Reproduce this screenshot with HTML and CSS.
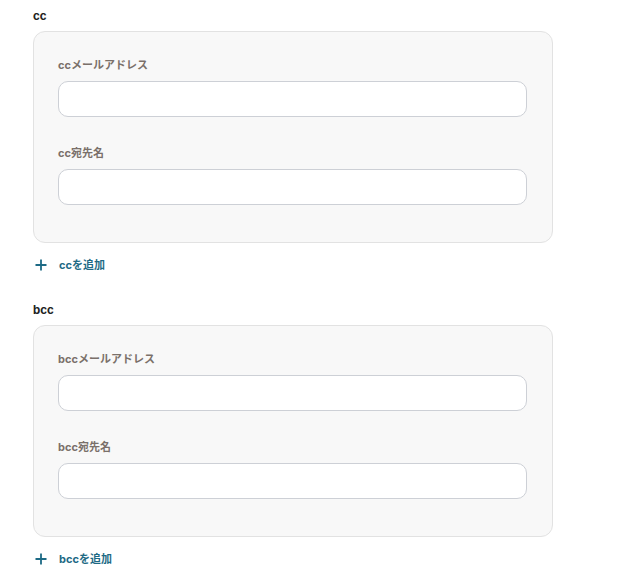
FILE: index.html
```html
<!DOCTYPE html>
<html lang="ja">
<head>
<meta charset="utf-8">
<link rel="stylesheet" href="styles.css">
</head>
<body>
<div class="page">
  <section class="group">
    <div class="group-title">cc</div>
    <div class="card">
      <div class="field">
        <label class="label">ccメールアドレス</label>
        <input class="input" type="text">
      </div>
      <div class="field">
        <label class="label">cc宛先名</label>
        <input class="input" type="text">
      </div>
    </div>
    <button class="add" type="button">
      <svg class="plus" width="12" height="12" viewBox="0 0 12 12"><path d="M6 0.5V11.5M0.5 6H11.5" stroke="currentColor" stroke-width="1.8" fill="none"/></svg>
      <span>ccを追加</span>
    </button>
  </section>
  <section class="group">
    <div class="group-title">bcc</div>
    <div class="card">
      <div class="field">
        <label class="label">bccメールアドレス</label>
        <input class="input" type="text">
      </div>
      <div class="field">
        <label class="label">bcc宛先名</label>
        <input class="input" type="text">
      </div>
    </div>
    <button class="add" type="button">
      <svg class="plus" width="12" height="12" viewBox="0 0 12 12"><path d="M6 0.5V11.5M0.5 6H11.5" stroke="currentColor" stroke-width="1.8" fill="none"/></svg>
      <span>bccを追加</span>
    </button>
  </section>
</div>
</body>
</html>
```
FILE: styles.css
```css
* { box-sizing: border-box; }
html, body { margin: 0; background: #fff; }
body {
  font-family: Inter, "Noto Sans CJK JP", sans-serif;
  color: #222;
}
.page {
  padding: 8px 0 0 33px;
  width: 553px;
}
.group { display: flex; flex-direction: column; }
.group + .group { margin-top: 28px; }
.group-title {
  font-size: 11.5px;
  font-weight: 700;
  line-height: 17px;
  color: #222;
  margin-bottom: 6px;
}
.card {
  background: #f8f8f8;
  border: 1px solid #e2e2e2;
  border-radius: 12px;
  padding: 25px 25px 37px 24px;
  display: flex;
  flex-direction: column;
  gap: 28px;
}
.field { display: flex; flex-direction: column; }
.label {
  font-size: 11px;
  font-weight: 700;
  line-height: 17px;
  color: #7a706a;
  margin-bottom: 7px;
}
.input {
  height: 36px;
  border: 1px solid #cdd0d6;
  border-radius: 10px;
  background: #fff;
  font: inherit;
  padding: 0 12px;
  outline: none;
}
.add {
  margin-top: 13px;
  align-self: flex-start;
  display: flex;
  align-items: center;
  gap: 12px;
  padding: 0 0 0 2px;
  border: 0;
  background: none;
  color: #1d6a85;
  font-family: Inter, "Noto Sans CJK JP", sans-serif;
  font-size: 11px;
  font-weight: 700;
  line-height: 18px;
  cursor: pointer;
}
.plus { display: block; }
```
